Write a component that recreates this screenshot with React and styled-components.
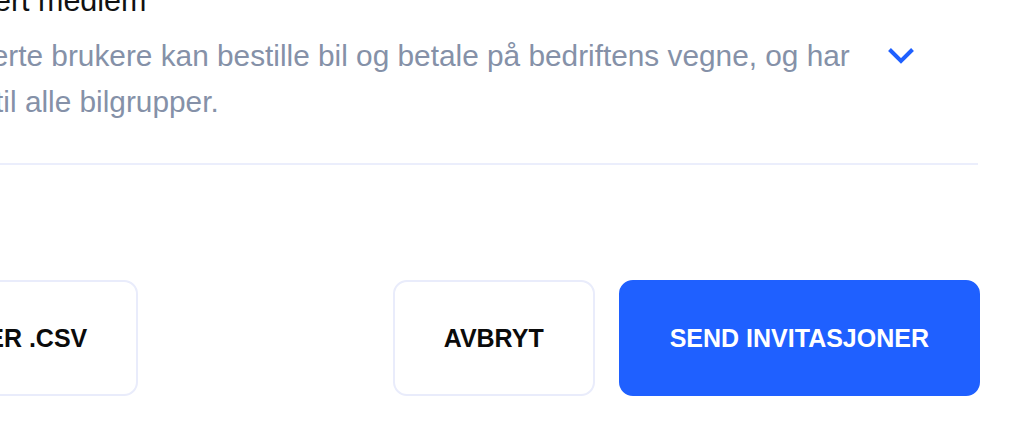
import styled, { createGlobalStyle } from "styled-components";

const GlobalStyle = createGlobalStyle`
  html, body {
    margin: 0;
    padding: 0;
    background: #fff;
  }
  body {
    font-family: "Liberation Sans", Arial, sans-serif;
  }
`;

const Page = styled.div`
  width: 1016px;
  height: 434px;
  overflow: hidden;
`;

const Dialog = styled.div`
  width: 1141px;
  margin-left: -161px;
  margin-top: -20px;
`;

const Option = styled.div`
  display: flex;
  align-items: flex-start;
`;

const Radio = styled.span`
  flex: none;
  width: 28px;
  height: 28px;
  margin: 6px 32px 0 0;
  border-radius: 50%;
  border: 2px solid #1f60ff;
  box-sizing: border-box;
`;

const OptionText = styled.div`
  width: 963px;
`;

const Title = styled.h3`
  margin: 0;
  font-size: 30.5px;
  line-height: 40px;
  font-weight: 400;
  color: #111;
`;

const Description = styled.p`
  margin: 13px 0 0;
  font-size: 29.8px;
  line-height: 46px;
  color: #8591a8;
`;

const Toggle = styled.button`
  flex: none;
  margin: 67px 0 0 25px;
  padding: 0;
  border: 0;
  background: none;
  display: flex;
  color: #1f60ff;
`;

const Divider = styled.hr`
  margin: 38px 2px 0 0;
  border: 0;
  height: 2px;
  background: #ebeefc;
`;

const Footer = styled.div`
  display: flex;
  align-items: center;
  justify-content: space-between;
  margin-top: 115px;
`;

const Actions = styled.div`
  display: flex;
  gap: 24px;
`;

const Button = styled.button`
  height: 116px;
  padding: 0 49px;
  border-radius: 14px;
  border: 2px solid ${(p) => (p.$primary ? "#1f60ff" : "#e9ecfb")};
  background: ${(p) => (p.$primary ? "#1f60ff" : "#fff")};
  color: ${(p) => (p.$primary ? "#fff" : "#0b0b0b")};
  font-family: "Liberation Sans", Arial, sans-serif;
  font-size: 25px;
  font-weight: 700;
  cursor: pointer;
`;

const Chevron = () => (
  <svg width="28" height="17" viewBox="0 0 28 17" fill="none">
    <polyline
      points="2.5,2.5 14,14 25.5,2.5"
      stroke="currentColor"
      strokeWidth="4"
      strokeLinejoin="miter"
    />
  </svg>
);

export default function App() {
  return (
    <Page>
      <GlobalStyle />
      <Dialog>
        <Option>
          <Radio />
          <OptionText>
            <Title>Autorisert medlem</Title>
            <Description>
              Autoriserte brukere kan bestille bil og betale på bedriftens
              vegne, og har tilgang til alle bilgrupper.
            </Description>
          </OptionText>
          <Toggle aria-label="Vis mer">
            <Chevron />
          </Toggle>
        </Option>
        <Divider />
        <Footer>
          <Button>IMPORTER .CSV</Button>
          <Actions>
            <Button>AVBRYT</Button>
            <Button $primary>SEND INVITASJONER</Button>
          </Actions>
        </Footer>
      </Dialog>
    </Page>
  );
}
